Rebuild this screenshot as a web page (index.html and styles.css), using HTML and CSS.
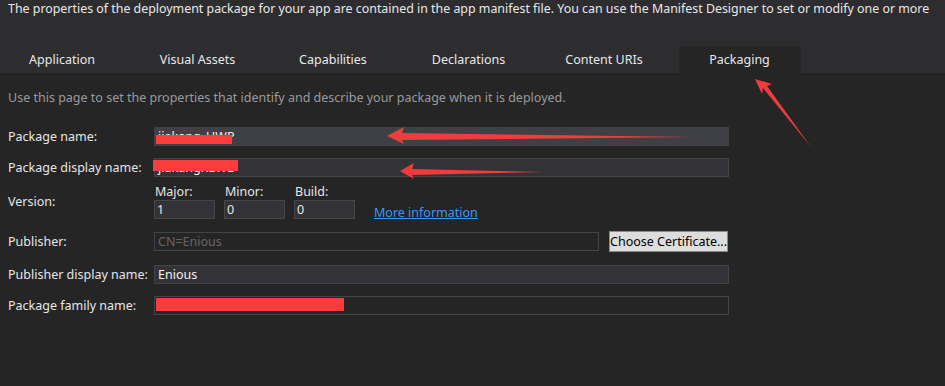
FILE: index.html
```html
<!DOCTYPE html>
<html lang="en">
<head>
    <meta charset="UTF-8">
    <title>Package.appxmanifest</title>
    <link rel="stylesheet" href="styles.css">
</head>
<body>
    <div class="header">
        <p class="intro">The properties of the deployment package for your app are contained in the app manifest file. You can use the Manifest Designer to set or modify one or more</p>
        <div class="tabs">
            <div class="tab">Application</div>
            <div class="tab">Visual Assets</div>
            <div class="tab">Capabilities</div>
            <div class="tab">Declarations</div>
            <div class="tab">Content URIs</div>
            <div class="tab active">Packaging</div>
        </div>
    </div>

    <div class="content">
        <p class="hint">Use this page to set the properties that identify and describe your package when it is deployed.</p>

        <div class="form">
            <div class="row row-name">
                <label>Package name:</label>
                <div class="field field-hi">jiakang_UWP</div>
            </div>
            <div class="row row-display">
                <label>Package display name:</label>
                <div class="field">jiakangREWE</div>
            </div>
            <div class="row row-version">
                <label>Version:</label>
                <div class="version">
                    <div class="vpart">
                        <span class="vlabel">Major:</span>
                        <div class="vbox">1</div>
                    </div>
                    <div class="vpart">
                        <span class="vlabel">Minor:</span>
                        <div class="vbox">0</div>
                    </div>
                    <div class="vpart">
                        <span class="vlabel">Build:</span>
                        <div class="vbox">0</div>
                    </div>
                    <a class="more" href="#">More information</a>
                </div>
            </div>
            <div class="row row-publisher">
                <label>Publisher:</label>
                <div class="publisher">
                    <div class="field field-disabled">CN=Enious</div>
                    <button class="cert-btn">Choose Certificate...</button>
                </div>
            </div>
            <div class="row row-pubname">
                <label>Publisher display name:</label>
                <div class="field">Enious</div>
            </div>
            <div class="row row-family">
                <label>Package family name:</label>
                <div class="field field-readonly"></div>
            </div>
        </div>
    </div>

    <!-- annotations drawn over the screenshot -->
    <svg class="marks" width="945" height="386" viewBox="0 0 945 386">
        <rect x="156" y="135" width="76" height="9" fill="#fa3c3c"/>
        <rect x="153" y="160" width="85" height="11" fill="#fa3c3c"/>
        <rect x="156" y="298" width="188" height="13" fill="#fa3c3c"/>
        <polygon points="387,136 404,127 402,133 693,137 402,140 404,144" fill="#f03c3c"/>
        <polygon points="400,171 414,163 412,169 543,172 412,175 414,179" fill="#f03c3c"/>
        <polygon points="755,79 772,84 767,86 811,147 763,88 762,94" fill="#f03c3c"/>
    </svg>
</body>
</html>
```

FILE: styles.css
```css
* {
    box-sizing: border-box;
    margin: 0;
    padding: 0;
}

body {
    width: 945px;
    height: 386px;
    overflow: hidden;
    background-color: #252526;
    color: #e6e6e6;
    font-family: 'Noto Sans', 'Open Sans', sans-serif;
    font-size: 12.5px;
    position: relative;
}

.header {
    background-color: #2d2d30;
    height: 73px;
}

.intro {
    white-space: nowrap;
    padding: 1px 0 0 8px;
    line-height: 16px;
    font-size: 12.4px;
    color: #e8e8e8;
}

.tabs {
    display: flex;
    gap: 13.5px;
    margin-top: 29px;
    padding-left: 1px;
}

.tab {
    width: 122px;
    height: 27px;
    line-height: 28px;
    text-align: center;
    color: #e8e8e8;
}

.tab.active {
    background-color: #252526;
}

.content {
    padding: 17px 0 0 8px;
}

.hint {
    color: #9a9a9a;
    line-height: 16px;
}

.form {
    display: flex;
    flex-direction: column;
    margin-top: 21px;
}

.row {
    display: grid;
    grid-template-columns: 146px 575px;
    align-items: center;
}

.row label {
    color: #e6e6e6;
}

.field {
    height: 19px;
    line-height: 17px;
    padding: 0 3px;
    background-color: #333337;
    border: 1px solid #434346;
    color: #f1f1f1;
    white-space: nowrap;
    overflow: hidden;
}

.field-hi {
    background-color: #3f3f46;
    border-color: #3f3f46;
}

.field-disabled {
    background-color: #252526;
    color: #656565;
    flex: 0 0 445px;
}

.field-readonly {
    background-color: #252526;
}

.row-display {
    margin-top: 12px;
}

.row-version {
    margin-top: 7px;
}

.version {
    display: flex;
    align-items: flex-end;
    gap: 9px;
}

.vpart {
    display: flex;
    flex-direction: column;
    width: 61px;
}

.vlabel {
    line-height: 16px;
    padding-left: 1px;
}

.vbox {
    height: 19px;
    line-height: 17px;
    padding: 0 2px;
    background-color: #333337;
    border: 1px solid #46464a;
}

.more {
    color: #3399ff;
    margin-left: 10px;
    line-height: 16px;
    margin-bottom: -2px;
}

.row-publisher {
    margin-top: 12px;
}

.publisher {
    display: flex;
    align-items: center;
    gap: 10px;
}

.cert-btn {
    width: 119px;
    height: 21px;
    font-family: inherit;
    font-size: 12.5px;
    color: #000;
    background-color: #dddddd;
    border: 1px solid #8a8a8a;
    padding: 0;
    white-space: nowrap;
}

.row-pubname {
    margin-top: 13px;
}

.row-family {
    margin-top: 12px;
}

.marks {
    position: absolute;
    left: 0;
    top: 0;
    pointer-events: none;
}
```
